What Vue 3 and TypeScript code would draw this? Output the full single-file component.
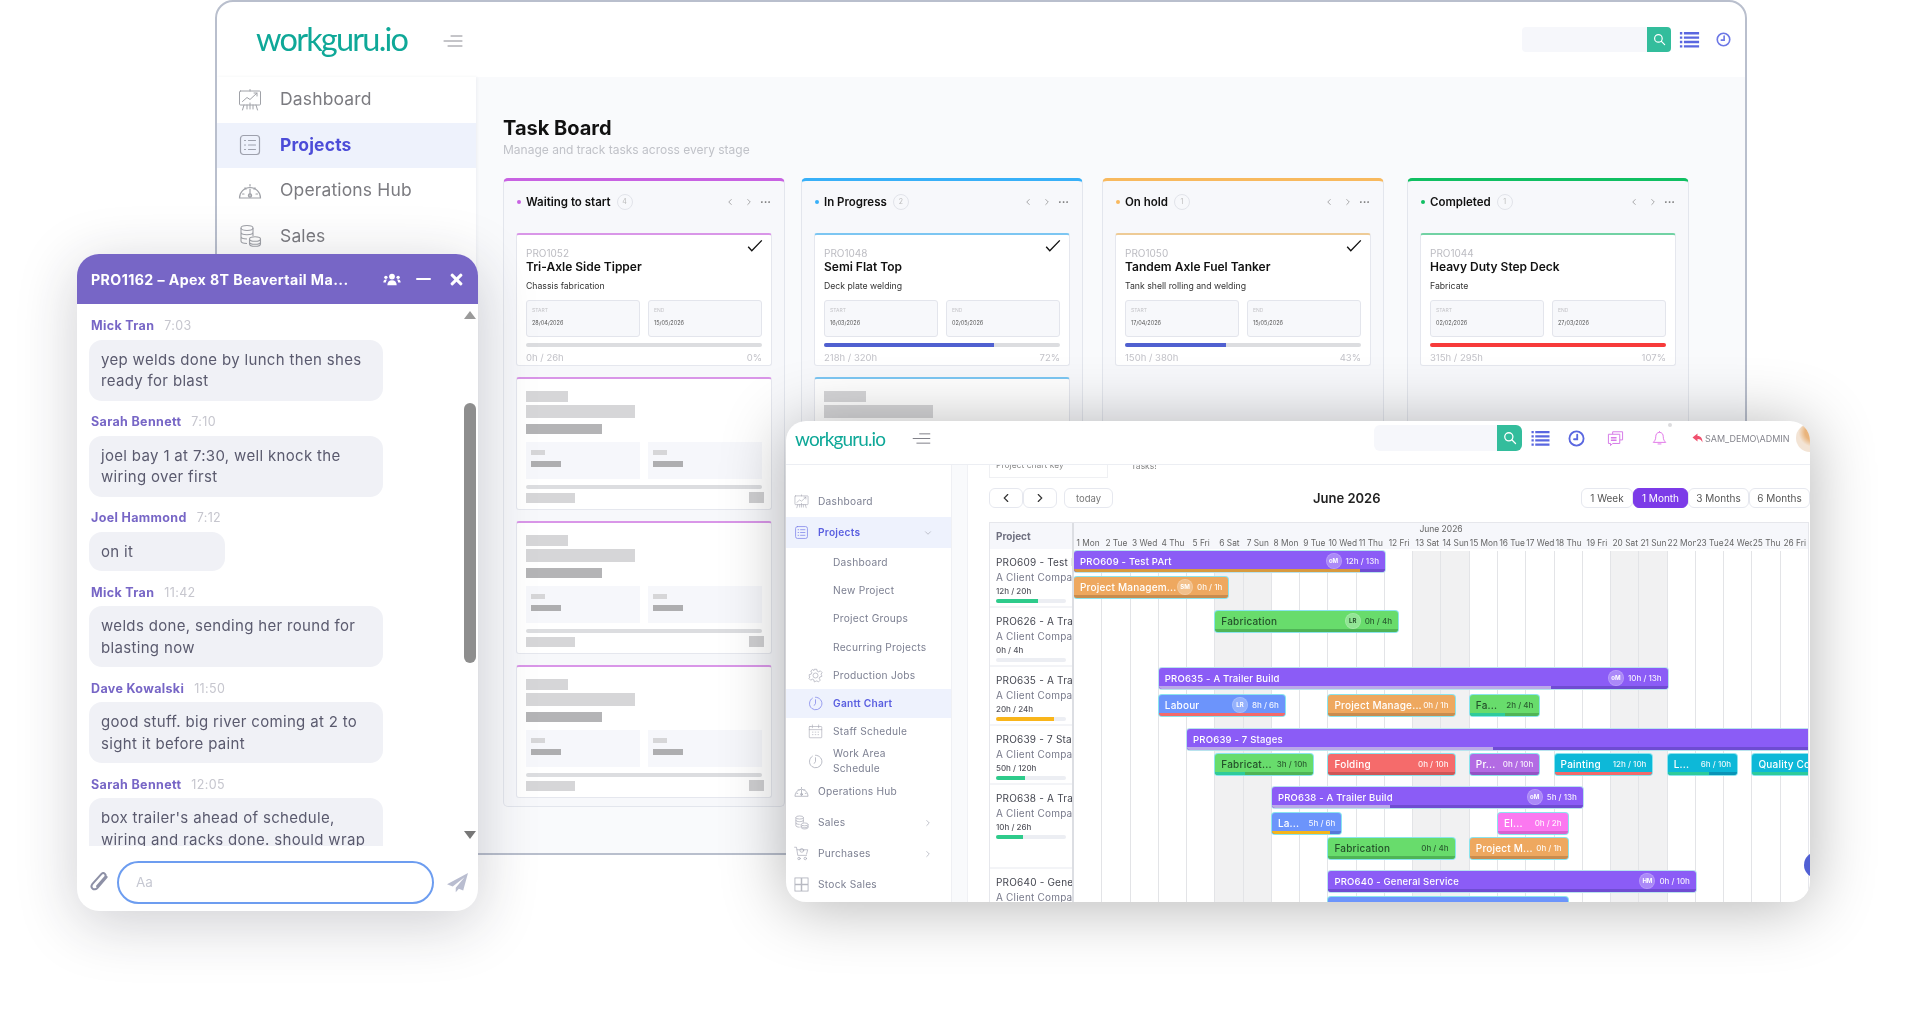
<script setup lang="ts">
interface Stage {
  title: string
  color: string
  soft: string
  count: number
  code: string
  name: string
  sub: string
  start: string
  end: string
  hours: string
  pct: number
  label: string
  bar: string
  done: boolean
  ghosts: number
}

interface Message {
  who: string
  at: string
  text: string
  short?: boolean
}

interface Bar {
  from: number
  to: number
  name: string
  color: string
  track: string
  strip?: string
  fill?: number
  who?: string
  hours?: string
  dark?: boolean
  parent?: boolean
}

interface NavItem {
  label: string
  icon?: string
  sub?: boolean
  active?: boolean
  arrow?: string
  tall?: boolean
}

const stages: Stage[] = [
  { title: 'Waiting to start', color: '#c862e2', soft: '#d996e8', count: 4, code: 'PRO1052', name: 'Tri-Axle Side Tipper', sub: 'Chassis fabrication', start: '28/04/2026', end: '15/05/2026', hours: '0h / 26h', pct: 0, label: '0%', bar: '#5060d0', done: true, ghosts: 3 },
  { title: 'In Progress', color: '#38b0f8', soft: '#7cc6f2', count: 2, code: 'PRO1048', name: 'Semi Flat Top', sub: 'Deck plate welding', start: '16/03/2026', end: '02/05/2026', hours: '218h / 320h', pct: 72, label: '72%', bar: '#5060d0', done: true, ghosts: 1 },
  { title: 'On hold', color: '#f8b95e', soft: '#eecb96', count: 1, code: 'PRO1050', name: 'Tandem Axle Fuel Tanker', sub: 'Tank shell rolling and welding', start: '17/04/2026', end: '15/05/2026', hours: '150h / 380h', pct: 43, label: '43%', bar: '#5060d0', done: true, ghosts: 0 },
  { title: 'Completed', color: '#10bf62', soft: '#72d2a4', count: 1, code: 'PRO1044', name: 'Heavy Duty Step Deck', sub: 'Fabricate', start: '02/02/2026', end: '27/03/2026', hours: '315h / 295h', pct: 100, label: '107%', bar: '#f73a3a', done: false, ghosts: 0 },
]

const messages: Message[] = [
  { who: 'Mick Tran', at: '7:03', text: 'yep welds done by lunch then shes ready for blast' },
  { who: 'Sarah Bennett', at: '7:10', text: 'joel bay 1 at 7:30, well knock the wiring over first' },
  { who: 'Joel Hammond', at: '7:12', text: 'on it', short: true },
  { who: 'Mick Tran', at: '11:42', text: 'welds done, sending her round for blasting now' },
  { who: 'Dave Kowalski', at: '11:50', text: 'good stuff. big river coming at 2 to sight it before paint' },
  { who: 'Sarah Bennett', at: '12:05', text: "box trailer's ahead of schedule, wiring and racks done. should wrap" },
]

const backNav = [
  { label: 'Dashboard', icon: 'i-board' },
  { label: 'Projects', icon: 'i-list', active: true },
  { label: 'Operations Hub', icon: 'i-gauge' },
  { label: 'Sales', icon: 'i-coins' },
]

const ganttNav: NavItem[] = [
  { label: 'Dashboard', icon: 'i-board' },
  { label: 'Projects', icon: 'i-list', active: true, arrow: 'down' },
  { label: 'Dashboard', sub: true },
  { label: 'New Project', sub: true },
  { label: 'Project Groups', sub: true },
  { label: 'Recurring Projects', sub: true },
  { label: 'Production Jobs', sub: true, icon: 'i-gear' },
  { label: 'Gantt Chart', sub: true, icon: 'i-clock', active: true },
  { label: 'Staff Schedule', sub: true, icon: 'i-cal' },
  { label: 'Work Area Schedule', sub: true, icon: 'i-clock', tall: true },
  { label: 'Operations Hub', icon: 'i-gauge' },
  { label: 'Sales', icon: 'i-coins', arrow: 'right' },
  { label: 'Purchases', icon: 'i-cart', arrow: 'right' },
  { label: 'Stock Sales', icon: 'i-grid' },
]

const projects = [
  { name: 'PRO609 - Test PArt', client: 'A Client Company', hours: '12h / 20h', pct: 60, color: '#2ecb8b', height: 59 },
  { name: 'PRO626 - A Trailer', client: 'A Client Company', hours: '0h / 4h', pct: 0, color: '#2ecb8b', height: 59 },
  { name: 'PRO635 - A Trailer', client: 'A Client Company', hours: '20h / 24h', pct: 83, color: '#f9b51a', height: 59 },
  { name: 'PRO639 - 7 Stages', client: 'A Client Company', hours: '50h / 120h', pct: 42, color: '#2ecb8b', height: 59 },
  { name: 'PRO638 - A Trailer', client: 'A Client Company', hours: '10h / 26h', pct: 38, color: '#2ecb8b', height: 84 },
  { name: 'PRO640 - General', client: 'A Client Company', hours: '', pct: 0, color: '#2ecb8b', height: 60 },
]

const dayNames = ['Mon', 'Tue', 'Wed', 'Thu', 'Fri', 'Sat', 'Sun']
const days = Array.from({ length: 26 }, (_, i) => ({
  label: `${i + 1} ${dayNames[i % 7]}`,
  weekend: i % 7 >= 5,
}))

const purple = '#8b5cf6'
const purpleDark = '#6f4cd2'
const pale = '#bba9e8'
const orange = '#eea85f'
const orangeDark = '#c98c4e'
const green = '#68dc6c'
const greenDark = '#4fb456'
const blue = '#6c94fb'
const cyan = '#0db8d8'
const cyanDark = '#0a94b6'
const teal = '#2ecb9b'

const rows: { gap: number; bars: Bar[] }[] = [
  { gap: 2, bars: [{ from: 0, to: 11, name: 'PRO609 - Test PArt', color: purple, track: purpleDark, strip: '#d89a3f', fill: 92, who: 'oM', hours: '12h / 13h', parent: true }] },
  { gap: 5, bars: [{ from: 0, to: 5.46, name: 'Project Managem...', color: orange, track: orangeDark, who: 'SM', hours: '0h / 1h' }] },
  { gap: 13, bars: [{ from: 5, to: 11.46, name: 'Fabrication', color: green, track: greenDark, who: 'LR', hours: '0h / 4h', dark: true }] },
  { gap: 36, bars: [{ from: 3, to: 21, name: 'PRO635 - A Trailer Build', color: purple, track: purpleDark, strip: pale, fill: 77, who: 'oM', hours: '10h / 13h', parent: true }] },
  { gap: 6, bars: [
    { from: 3, to: 7.46, name: 'Labour', color: blue, track: '#5577d8', strip: '#f26a6a', fill: 100, who: 'LR', hours: '8h / 6h' },
    { from: 9, to: 13.46, name: 'Project Manage...', color: orange, track: orangeDark, hours: '0h / 1h' },
    { from: 14, to: 16.46, name: 'Fa...', color: green, track: greenDark, strip: teal, fill: 50, hours: '2h / 4h', dark: true },
  ] },
  { gap: 13, bars: [{ from: 4, to: 27, name: 'PRO639 - 7 Stages', color: purple, track: purpleDark, strip: pale, fill: 47, parent: true }] },
  { gap: 4, bars: [
    { from: 5, to: 8.46, name: 'Fabricat...', color: green, track: greenDark, strip: teal, fill: 30, hours: '3h / 10h', dark: true },
    { from: 9, to: 13.46, name: 'Folding', color: '#f56b6b', track: '#cf5656', hours: '0h / 10h' },
    { from: 14, to: 16.46, name: 'Pr...', color: '#b36be3', track: '#9354c4', hours: '0h / 10h' },
    { from: 17, to: 20.46, name: 'Painting', color: cyan, track: cyanDark, strip: '#f26a6a', fill: 100, hours: '12h / 10h' },
    { from: 21, to: 23.46, name: 'L...', color: cyan, track: cyanDark, strip: teal, fill: 60, hours: '6h / 10h' },
    { from: 24, to: 27.5, name: 'Quality Control', color: cyan, track: cyanDark, strip: teal, fill: 100 },
  ] },
  { gap: 12, bars: [{ from: 7, to: 18, name: 'PRO638 - A Trailer Build', color: purple, track: purpleDark, strip: pale, fill: 38, who: 'oM', hours: '5h / 13h', parent: true }] },
  { gap: 5, bars: [
    { from: 7, to: 9.46, name: 'La...', color: blue, track: '#5577d8', strip: '#f5b51a', fill: 83, hours: '5h / 6h' },
    { from: 15, to: 17.46, name: 'El...', color: '#fb78f0', track: '#d862cf', hours: '0h / 2h' },
  ] },
  { gap: 4, bars: [
    { from: 9, to: 13.46, name: 'Fabrication', color: green, track: greenDark, hours: '0h / 4h', dark: true },
    { from: 14, to: 17.46, name: 'Project M...', color: orange, track: orangeDark, hours: '0h / 1h' },
  ] },
  { gap: 12, bars: [{ from: 9, to: 22, name: 'PRO640 - General Service', color: purple, track: purpleDark, who: 'HM', hours: '0h / 10h', parent: true }] },
  { gap: 5, bars: [{ from: 9, to: 17.46, name: '', color: blue, track: '#5577d8' }] },
]

const dayWidth = 28.27
const views = ['1 Week', '1 Month', '3 Months', '6 Months']
</script>

<template>
  <div class="canvas">
    <svg class="defs" width="0" height="0">
      <symbol id="i-menu" viewBox="0 0 20 14" fill="none" stroke="currentColor" stroke-width="1" stroke-linecap="round">
        <path d="M8 2h11M1 7h18M5 12h14" />
      </symbol>
      <symbol id="i-board" viewBox="0 0 24 24" fill="none" stroke="currentColor" stroke-width="1" stroke-linecap="round">
        <rect x="1.500" y="3" width="21" height="14" rx="1" />
        <path d="M12 3V1.500M4.500 13.500 9 9.500l3 2 7-6.500M16 5h3v3M6 17l-1.500 5M18 17l1.500 5M9 17v4M12 15v6M15 17v4" />
      </symbol>
      <symbol id="i-list" viewBox="0 0 24 24" fill="none" stroke="currentColor" stroke-width="1.200" stroke-linecap="round">
        <rect x="2.500" y="2.500" width="19" height="19" rx="3" />
        <path d="M6.500 7.500h1M6.500 12h1M6.500 16.500h1M10.500 7.500h7M10.500 12h7M10.500 16.500h7" />
      </symbol>
      <symbol id="i-gauge" viewBox="0 0 24 24" fill="none" stroke="currentColor" stroke-width="1.200" stroke-linecap="round">
        <path d="M1.500 19a10.500 10.500 0 1 1 21 0z" />
        <path d="M12 18V10M4.500 15H6M18 15h1.500M7 9l1 1M17 9l-1 1M12 5.500V7" />
        <circle cx="12" cy="16.500" r="1.600" />
      </symbol>
      <symbol id="i-coins" viewBox="0 0 24 24" fill="none" stroke="currentColor" stroke-width="1.100">
        <ellipse cx="9" cy="4" rx="6" ry="2.500" />
        <path d="M3 4v13c0 1.400 2.700 2.500 6 2.500M15 4v8M3 8.200c0 1.400 2.700 2.500 6 2.500s6-1.100 6-2.500M3 12.500C3 13.900 5.700 15 9 15" />
        <ellipse cx="17" cy="15" rx="5.500" ry="2.300" />
        <path d="M11.500 15v5c0 1.300 2.500 2.300 5.500 2.300s5.500-1 5.500-2.300v-5M11.500 18c0 1.300 2.500 2.300 5.500 2.300s5.500-1 5.500-2.300" />
      </symbol>
      <symbol id="i-gear" viewBox="0 0 24 24" fill="none" stroke="currentColor" stroke-width="1.100">
        <circle cx="12" cy="12" r="4" />
        <path d="M10 2h4l.6 3 2.500 1.100L19.700 4.500l2.800 2.800-1.600 2.600L22 12.500v1l-3 .8-1 2.500 1.600 2.600-2.800 2.800-2.600-1.600-2.500 1L11 22H10l-.6-3-2.500-1.100-2.600 1.600-2.800-2.800 1.600-2.600L2 13.500v-3l3-.6 1-2.500-1.600-2.600 2.800-2.300 2.400 1.500z" />
      </symbol>
      <symbol id="i-clock" viewBox="0 0 24 24" fill="none" stroke="currentColor" stroke-width="1.200" stroke-linecap="round">
        <path d="M7 3.500A10 10 0 1 0 12 2" />
        <path d="M12 6v6l-2 3" />
      </symbol>
      <symbol id="i-ring" viewBox="0 0 24 24" fill="none" stroke="currentColor" stroke-width="2.600" stroke-linecap="round">
        <circle cx="12" cy="12" r="10" />
        <path d="M13 6.500V13H8.500" />
      </symbol>
      <symbol id="i-cal" viewBox="0 0 24 24" fill="none" stroke="currentColor" stroke-width="1" stroke-linecap="round">
        <rect x="2" y="4" width="20" height="18" rx="1" />
        <path d="M7 1.500V6M17 1.500V6M2 9h20M7 13h1M11.500 13h1M16 13h1M7 17h1M11.500 17h1M16 17h1" />
      </symbol>
      <symbol id="i-cart" viewBox="0 0 24 24" fill="none" stroke="currentColor" stroke-width="1.100" stroke-linecap="round">
        <path d="M1 2h3l2 13h14M5 6h17l-2 7" />
        <circle cx="12.500" cy="7" r="3" />
        <circle cx="8" cy="20" r="2" />
        <circle cx="18" cy="20" r="2" />
      </symbol>
      <symbol id="i-grid" viewBox="0 0 24 24" fill="none" stroke="currentColor" stroke-width="1.200">
        <rect x="1.500" y="1.500" width="10" height="10" />
        <rect x="12.500" y="1.500" width="10" height="10" />
        <rect x="1.500" y="12.500" width="10" height="10" />
        <rect x="12.500" y="12.500" width="10" height="10" />
      </symbol>
      <symbol id="i-down" viewBox="0 0 12 12" fill="none" stroke="currentColor" stroke-width="1" stroke-linecap="round">
        <path d="m3 4.500 3 3 3-3" />
      </symbol>
      <symbol id="i-right" viewBox="0 0 12 12" fill="none" stroke="currentColor" stroke-width="1" stroke-linecap="round">
        <path d="m4.500 3 3 3-3 3" />
      </symbol>
      <symbol id="i-left" viewBox="0 0 12 12" fill="none" stroke="currentColor" stroke-width="1" stroke-linecap="round">
        <path d="M7.500 3l-3 3 3 3" />
      </symbol>
      <symbol id="i-search" viewBox="0 0 24 24" fill="none" stroke="currentColor" stroke-width="2.200" stroke-linecap="round">
        <circle cx="10" cy="10" r="7" />
        <path d="m15.500 15.500 6 6" />
      </symbol>
      <symbol id="i-lines" viewBox="0 0 24 20" fill="currentColor">
        <path d="M0 0h3v3H0zM5 0h19v3H5zM0 5.500h3v3H0zM5 5.500h19v3H5zM0 11h3v3H0zM5 11h19v3H5zM0 16.500h3v3H0zM5 16.500h19v3H5z" />
      </symbol>
      <symbol id="i-chat" viewBox="0 0 24 24" fill="none" stroke="currentColor" stroke-width="1.400" stroke-linejoin="round">
        <path d="M8 6V2.500h14V14h-4" />
        <path d="M2 6h16v13H8l-3 3v-3H2z" />
        <path d="M5.500 11h8M5.500 14.500h8" stroke-width="2" />
      </symbol>
      <symbol id="i-bell" viewBox="0 0 24 24" fill="none" stroke="currentColor" stroke-width="1.500" stroke-linejoin="round">
        <path d="M12 3c-4 0-6 3-6 7 0 5-2 7-4 9h20c-2-2-4-4-4-9 0-4-2-7-6-7z" />
        <path d="M9 21.500h6M12 1v2" />
      </symbol>
      <symbol id="i-reply" viewBox="0 0 24 24" fill="currentColor">
        <path d="M11 3 1 11l10 8v-5c5 0 8 2 10 7 0-8-3-13-10-13z" />
      </symbol>
      <symbol id="i-users" viewBox="0 0 24 18" fill="currentColor">
        <circle cx="12" cy="5" r="4" />
        <path d="M5.500 17c0-4.500 2.500-7 6.500-7s6.500 2.500 6.500 7z" />
        <circle cx="3.500" cy="6" r="2.300" />
        <circle cx="20.500" cy="6" r="2.300" />
        <path d="M0 13c0-2.500 1.500-4 3.500-4 .6 0 1.100.1 1.500.3C4 10.500 3.600 11.700 3.500 13zM24 13c0-2.500-1.500-4-3.500-4-.6 0-1.100.1-1.500.3 1 1.200 1.400 2.400 1.500 3.700z" />
      </symbol>
      <symbol id="i-clip" viewBox="0 0 24 24" fill="none" stroke="currentColor" stroke-width="2.400" stroke-linecap="round">
        <path d="M20 6 9 19c-1.600 2-4.300 2.300-5.800 1-1.600-1.300-1.700-3.800-.2-5.700L13.500 2.500c1.200-1.300 3-1.500 4.200-.5s1.300 2.700.2 4.100L8.500 17" />
      </symbol>
      <symbol id="i-send" viewBox="0 0 24 24" fill="currentColor">
        <path d="M24 1 0 14l6.500 2.500L20 6 10 18v5l3.500-4 5 2z" />
      </symbol>
      <symbol id="i-check" viewBox="0 0 20 16" fill="none" stroke="currentColor" stroke-width="1.700">
        <path d="m1.500 9 4.500 5L18.500 1" />
      </symbol>
    </svg>

    <!-- window at the back: task board -->
    <section class="win-back">
      <header class="back-top">
        <span class="logo">workguru.io</span>
        <svg class="back-menu"><use href="#i-menu" /></svg>
        <div class="back-tools">
          <div class="search">
            <span class="search-btn"><svg class="search-ico"><use href="#i-search" /></svg></span>
          </div>
          <svg class="tool-lines"><use href="#i-lines" /></svg>
          <svg class="tool-ring"><use href="#i-ring" /></svg>
        </div>
      </header>
      <div class="back-body">
        <nav class="back-nav">
          <div v-for="item in backNav" :key="item.label" class="back-link" :class="{ on: item.active }">
            <svg class="back-ico"><use :href="'#' + item.icon" /></svg>
            <span>{{ item.label }}</span>
          </div>
        </nav>
        <main class="board-page">
          <h1 class="page-title">Task Board</h1>
          <p class="page-sub">Manage and track tasks across every stage</p>
          <div class="board">
            <div v-for="st in stages" :key="st.title" class="col" :style="{ borderTopColor: st.color }">
              <div class="col-head">
                <i class="dot" :style="{ background: st.color }"></i>
                <b>{{ st.title }}</b>
                <span class="count">{{ st.count }}</span>
                <span class="col-tools">
                  <svg><use href="#i-left" /></svg>
                  <svg><use href="#i-right" /></svg>
                  <em>···</em>
                </span>
              </div>
              <article class="card" :style="{ borderTopColor: st.soft }">
                <svg v-if="st.done" class="check"><use href="#i-check" /></svg>
                <div class="card-code">{{ st.code }}</div>
                <div class="card-name">{{ st.name }}</div>
                <div class="card-sub">{{ st.sub }}</div>
                <div class="dates">
                  <div class="date"><small>START</small><span>{{ st.start }}</span></div>
                  <div class="date"><small>END</small><span>{{ st.end }}</span></div>
                </div>
                <div class="meter"><i :style="{ width: st.pct + '%', background: st.bar }"></i></div>
                <div class="card-foot"><span>{{ st.hours }}</span><span>{{ st.label }}</span></div>
              </article>
              <article v-for="n in st.ghosts" :key="n" class="card ghost" :style="{ borderTopColor: st.soft }">
                <i class="g g-code"></i>
                <i class="g g-name"></i>
                <i class="g g-sub"></i>
                <div class="g-dates">
                  <div class="g-date"><i class="g g-lab"></i><i class="g g-val"></i></div>
                  <div class="g-date"><i class="g g-lab"></i><i class="g g-val"></i></div>
                </div>
                <div class="meter"></div>
                <div class="g-foot"><i class="g g-hours"></i><i class="g g-pct"></i></div>
              </article>
            </div>
          </div>
        </main>
      </div>
    </section>

    <!-- chat window -->
    <section class="win-chat">
      <header class="chat-top">
        <span class="chat-title">PRO1162 – Apex 8T Beavertail Ma...</span>
        <svg class="chat-users"><use href="#i-users" /></svg>
        <i class="chat-min"></i>
        <span class="chat-x"></span>
      </header>
      <div class="chat-body">
        <div class="msgs">
          <div v-for="(m, i) in messages" :key="i" class="msg">
            <div class="msg-head"><b>{{ m.who }}</b><span>{{ m.at }}</span></div>
            <div class="bubble" :class="{ short: m.short }">{{ m.text }}</div>
          </div>
        </div>
        <div class="scroll">
          <i class="tri up"></i>
          <i class="thumb"></i>
          <i class="tri down"></i>
        </div>
      </div>
      <footer class="chat-foot">
        <svg class="clip"><use href="#i-clip" /></svg>
        <div class="chat-input">Aa</div>
        <svg class="send"><use href="#i-send" /></svg>
      </footer>
    </section>

    <!-- window at the front: gantt -->
    <section class="win-gantt">
      <header class="g-top">
        <span class="logo small">workguru.io</span>
        <svg class="g-menu"><use href="#i-menu" /></svg>
        <div class="g-tools">
          <div class="search">
            <span class="search-btn"><svg class="search-ico"><use href="#i-search" /></svg></span>
          </div>
          <svg class="t-lines"><use href="#i-lines" /></svg>
          <svg class="t-ring"><use href="#i-ring" /></svg>
          <svg class="t-chat"><use href="#i-chat" /></svg>
          <svg class="t-bell"><use href="#i-bell" /></svg>
          <i class="t-dot"></i>
          <svg class="t-reply"><use href="#i-reply" /></svg>
          <span class="t-user">SAM_DEMO\ADMIN</span>
          <i class="t-avatar"></i>
        </div>
      </header>
      <div class="g-body">
        <nav class="g-nav">
          <div
            v-for="(item, i) in ganttNav"
            :key="i"
            class="g-link"
            :class="{ on: item.active, sub: item.sub, tall: item.tall }"
          >
            <svg v-if="item.icon" class="g-ico"><use :href="'#' + item.icon" /></svg>
            <span class="g-label">{{ item.label }}</span>
            <svg v-if="item.arrow" class="g-arrow"><use :href="item.arrow === 'down' ? '#i-down' : '#i-right'" /></svg>
          </div>
        </nav>
        <div class="g-strip"></div>
        <div class="g-main">
          <div class="sliver">
            <div class="sliver-box">Project chart key</div>
            <span>Tasks!</span>
          </div>
          <div class="toolbar">
            <div class="btn-pair">
              <button class="tb-btn"><svg><use href="#i-left" /></svg></button>
              <button class="tb-btn"><svg><use href="#i-right" /></svg></button>
            </div>
            <button class="today">today</button>
            <h2 class="month">June 2026</h2>
            <div class="views">
              <button v-for="v in views" :key="v" class="view" :class="{ on: v === '1 Month' }">{{ v }}</button>
            </div>
          </div>
          <div class="table">
            <div class="proj-col">
              <div class="proj-head">Project</div>
              <div v-for="p in projects" :key="p.name" class="proj-row" :style="{ height: p.height + 'px' }">
                <div class="proj-name">{{ p.name }}</div>
                <div class="proj-client">{{ p.client }}</div>
                <div class="proj-hours">{{ p.hours }}</div>
                <div v-if="p.hours" class="proj-meter"><i :style="{ width: p.pct + '%', background: p.color }"></i></div>
              </div>
            </div>
            <div class="timeline">
              <div class="tl-month">June 2026</div>
              <div class="tl-days">
                <span v-for="d in days" :key="d.label" class="tl-day">{{ d.label }}</span>
              </div>
              <div class="tl-grid">
                <div class="tl-lines">
                  <i v-for="d in days" :key="d.label" :class="{ weekend: d.weekend }"></i>
                </div>
                <div v-for="(row, r) in rows" :key="r" class="tl-row" :style="{ marginTop: row.gap + 'px' }">
                  <div
                    v-for="b in row.bars"
                    :key="b.name + b.from"
                    class="bar"
                    :class="{ parent: b.parent, dark: b.dark }"
                    :style="{ left: b.from * dayWidth + 'px', width: (b.to - b.from) * dayWidth + 'px', background: b.color }"
                  >
                    <span class="bar-name">{{ b.name }}</span>
                    <span v-if="b.who" class="bar-who">{{ b.who }}</span>
                    <span v-if="b.hours" class="bar-hours">{{ b.hours }}</span>
                    <div class="bar-track" :style="{ background: b.track }">
                      <i v-if="b.strip" :style="{ width: b.fill + '%', background: b.strip }"></i>
                    </div>
                  </div>
                </div>
              </div>
            </div>
          </div>
        </div>
      </div>
      <i class="help-dot"></i>
    </section>
  </div>
</template>

<style scoped>
.canvas {
  position: relative;
  width: 1932px;
  height: 1023px;
  overflow: hidden;
  background: #fff;
  font-family: Inter, "Liberation Sans", sans-serif;
  filter: blur(0.55px);
}
.defs { position: absolute; }
button { font-family: inherit; cursor: pointer; }

.logo {
  flex: none;
  width: 152px;
  font-family: Lato, Inter, sans-serif;
  font-size: 32.500px;
  font-weight: 400;
  color: #0fa898;
  letter-spacing: -1.800px;
  line-height: 1;
  white-space: nowrap;
}
.logo.small { width: 86px; font-size: 19px; letter-spacing: -0.900px; }

.search {
  display: flex;
  justify-content: flex-end;
  background: #f6f7fb;
  border-radius: 4px;
  overflow: hidden;
}
.search-btn {
  display: flex;
  align-items: center;
  justify-content: center;
  background: #33bd9c;
}
.search-ico { color: #fff; }

/* back window */
.win-back {
  position: absolute;
  left: 215px;
  top: 0;
  width: 1532px;
  height: 855px;
  box-sizing: border-box;
  display: flex;
  flex-direction: column;
  background: #fff;
  border: 2px solid #b9bfcd;
  border-radius: 18px 18px 0 0;
  overflow: hidden;
}
.back-top {
  flex: 0 0 75px;
  display: flex;
  align-items: center;
  padding-left: 39px;
}
.back-menu { width: 20px; height: 14px; margin-left: 35px; margin-top: 2px; color: #8a8a92; }
.back-tools { margin-left: auto; display: flex; align-items: center; padding-right: 14px; }
.back-tools .search { width: 149px; height: 25px; }
.back-tools .search-btn { width: 24px; height: 25px; }
.back-tools .search-ico { width: 13px; height: 15px; }
.tool-lines { width: 21px; height: 16px; margin-left: 8px; color: #5a67e0; }
.tool-ring { width: 15px; height: 15px; margin-left: 16px; color: #6d78e6; }

.back-body { flex: 1; display: flex; min-height: 0; background: #f9fafc; }
.back-nav { width: 259px; flex: none; background: #fff; box-shadow: 1px 0 3px rgba(40, 50, 80, 0.06); }
.back-link {
  height: 45.500px;
  display: flex;
  align-items: center;
  gap: 18px;
  padding-left: 21px;
  font-size: 17.500px;
  letter-spacing: 0.150px;
  color: #7b7b80;
}
.back-link span { margin-top: -2px; }
.back-link.on { background: #eef2fc; color: #4c4cd8; font-weight: 700; }
.back-ico { width: 24px; height: 24px; color: #a0a2a8; }
.back-link.on .back-ico { color: #9ea1ad; }

.board-page { padding: 39px 0 0 27px; }
.page-title { margin: 0; font-size: 20px; font-weight: 700; line-height: 24px; color: #111; }
.page-sub { margin: 2px 0 0; font-size: 12px; line-height: 16px; color: #c0c2c8; }
.board { display: flex; gap: 16px; margin-top: 20px; }
.col {
  width: 282px;
  box-sizing: border-box;
  padding: 0 12px 8px;
  background: #f7f8fb;
  border: 1px solid #e3e6ed;
  border-top: 3px solid;
  border-radius: 5px;
}
.col:nth-child(3) { margin-left: 3px; }
.col:nth-child(4) { margin-left: 7px; }
.col-head { height: 42px; margin-bottom: 10px; display: flex; align-items: center; font-size: 11.500px; color: #111; }
.dot { width: 4px; height: 4px; margin-right: 3px; border-radius: 50%; margin-left: 1px; }
.col-head b { font-weight: 600; margin-left: 2px; }
.count {
  width: 14px;
  height: 14px;
  margin-left: 6px;
  border: 1px solid #e2e4ea;
  border-radius: 50%;
  text-align: center;
  font-size: 7px;
  line-height: 14px;
  color: #bbb;
}
.col-tools { margin-left: auto; display: flex; align-items: center; gap: 9px; color: #999; padding-right: 1px; }
.col-tools svg { width: 10px; height: 10px; }
.col-tools em { font-style: normal; font-size: 11px; font-weight: 700; color: #777; margin-left: -3px; }

.card {
  position: relative;
  height: 133px;
  box-sizing: border-box;
  padding: 12px 9px 0;
  margin-bottom: 11px;
  background: #fff;
  border: 1px solid #e5e7ee;
  border-top: 2px solid;
  border-radius: 3px;
}
.card:last-child { margin-bottom: 0; }
.check { position: absolute; right: 8px; top: 4px; width: 16px; height: 14px; color: #111; }
.card-code { font-size: 10px; line-height: 12px; color: #bcbcc2; }
.card-name { font-size: 12px; font-weight: 600; line-height: 16px; color: #111; }
.card-sub { margin-top: 5px; font-size: 8.700px; line-height: 12px; color: #333; }
.dates { display: flex; gap: 8px; margin-top: 8px; }
.date {
  flex: 1;
  height: 37px;
  box-sizing: border-box;
  padding: 6px 5px;
  display: flex;
  flex-direction: column;
  gap: 6px;
  background: #f7f8fb;
  border: 1px solid #e3e5ec;
  border-radius: 3px;
  font-size: 5.500px;
  line-height: 7px;
  color: #555;
}
.date small { font-size: 5px; color: #c4c4c8; }
.meter { height: 4px; margin-top: 6px; background: #dcdde0; border-radius: 2px; overflow: hidden; }
.meter i { display: block; height: 100%; }
.card-foot { display: flex; justify-content: space-between; margin-top: 5px; font-size: 9.500px; line-height: 12px; color: #c2c2c8; }

.ghost { padding-top: 12px; }
.g { display: block; background: #d6d6d8; }
.g-code { width: 42px; height: 11px; }
.g-name { width: 109px; height: 13px; margin-top: 3px; }
.g-sub { width: 76px; height: 10px; margin-top: 6px; background: #b4b4b6; }
.g-dates { display: flex; gap: 8px; margin-top: 8px; }
.g-date { flex: 1; height: 37px; box-sizing: border-box; padding: 8px 5px; background: #f6f7fb; }
.g-lab { width: 14px; height: 5px; }
.g-val { width: 30px; height: 6px; margin-top: 6px; background: #aeaeb0; }
.ghost .meter { margin-top: 6px; }
.g-foot { display: flex; justify-content: space-between; align-items: flex-end; margin-top: 3px; }
.g-hours { width: 49px; height: 10px; }
.g-pct { width: 15px; height: 11px; margin-right: -2px; background: #cfcfd1; }

/* chat window */
.win-chat {
  position: absolute;
  left: 77px;
  top: 254px;
  width: 401px;
  height: 657px;
  display: flex;
  flex-direction: column;
  background: #fff;
  border-radius: 22px;
  box-shadow: 0 12px 60px rgba(30, 30, 50, 0.22);
}
.chat-top {
  flex: 0 0 50px;
  display: flex;
  align-items: center;
  padding-left: 14px;
  background: #7766c6;
  border-radius: 22px 22px 0 0;
  color: #fff;
}
.chat-title { width: 292px; font-size: 14.200px; font-weight: 700; letter-spacing: 0.400px; white-space: nowrap; }
.chat-users { width: 18px; height: 13px; }
.chat-min { width: 15px; height: 2.500px; margin-left: 15px; background: #fff; border-radius: 2px; }
.chat-x { position: relative; width: 13px; height: 13px; margin-left: 19px; }
.chat-x::before,
.chat-x::after {
  content: "";
  position: absolute;
  left: -1px;
  top: 5px;
  width: 15px;
  height: 3px;
  background: #fff;
  border-radius: 1px;
  transform: rotate(45deg);
}
.chat-x::after { transform: rotate(-45deg); }

.chat-body { flex: 0 0 542px; display: flex; overflow: hidden; }
.msgs { width: 387px; flex: none; box-sizing: border-box; padding: 14px 0 0 12px; overflow: hidden; }
.msg { margin-bottom: 13.500px; }
.msg-head { display: flex; gap: 10px; height: 16px; margin-bottom: 5.500px; padding-left: 2px; font-size: 12.500px; letter-spacing: 0.350px; line-height: 16px; }
.msg-head b { font-weight: 700; color: #7766c6; }
.msg-head span { color: #c6c6ce; }
.bubble {
  width: 294px;
  box-sizing: border-box;
  padding: 9px 12px;
  background: #f0f1f6;
  border-radius: 13px;
  font-size: 15px;
  letter-spacing: 0.330px;
  line-height: 21.500px;
  color: #5a5a6e;
}
.bubble.short { width: 136px; }
.scroll { width: 12px; padding-top: 7px; display: flex; flex-direction: column; align-items: center; }
.tri { width: 0; height: 0; border-left: 6px solid transparent; border-right: 6px solid transparent; }
.tri.up { border-bottom: 8px solid #9a9a9a; }
.tri.down { border-top: 8px solid #777; margin-top: 168px; }
.thumb { width: 12px; height: 260px; margin-top: 84px; background: #8e8e8e; border-radius: 6px; }
.chat-foot { flex: 1; display: flex; align-items: center; padding: 7px 0 0 13px; }
.clip { width: 20px; height: 20px; color: #8d90a6; }
.chat-input {
  width: 317px;
  height: 43px;
  margin-left: 7px;
  box-sizing: border-box;
  padding-left: 17px;
  border: 2px solid #6d9df0;
  border-radius: 22px;
  font-size: 13.500px;
  line-height: 39px;
  color: #c6c8d2;
}
.send { width: 21px; height: 21px; margin-left: 13px; color: #b9bdd0; }

/* gantt window */
.win-gantt {
  position: absolute;
  left: 786px;
  top: 421px;
  width: 1024px;
  height: 481px;
  display: flex;
  flex-direction: column;
  background: #fff;
  border-radius: 20px;
  overflow: hidden;
  box-shadow: 0 4px 65px rgba(0, 0, 0, 0.3);
}
.g-top {
  flex: 0 0 44px;
  display: flex;
  align-items: center;
  padding: 0 0 9px 9px;
  border-bottom: 1px solid #eceef3;
  box-sizing: border-box;
}
.g-menu { width: 19px; height: 13px; margin-left: 31px; color: #77777f; }
.g-tools { position: relative; margin-left: auto; display: flex; align-items: center; }
.g-tools .search { width: 148px; height: 26px; border-radius: 6px; }
.g-tools .search-btn { width: 25px; height: 26px; }
.g-tools .search-ico { width: 14px; height: 14px; }
.t-lines { width: 19px; height: 15px; margin-left: 9px; color: #5a67e0; }
.t-ring { width: 17px; height: 17px; margin-left: 18px; color: #5a67e0; }
.t-chat { width: 17px; height: 17px; margin-left: 22px; color: #d77be8; }
.t-bell { width: 15px; height: 16px; margin-left: 28px; color: #e072e8; }
.t-dot { position: absolute; left: 294px; top: -1px; width: 4px; height: 4px; background: #dcdcde; border-radius: 50%; }
.t-reply { width: 12px; height: 12px; margin-left: 25px; color: #f0506e; }
.t-user { width: 91px; margin-left: 1px; font-size: 9px; color: #85858d; white-space: nowrap; }
.t-avatar {
  width: 28px;
  height: 28px;
  margin-right: -14px;
  border-radius: 50%;
  background: radial-gradient(circle at 60% 30%, #e9b47c 0 30%, #f3e4d5 55%), #f3e4d5;
}
.g-body { flex: 1; display: flex; min-height: 0; }
.g-nav { width: 166px; flex: none; padding-top: 21px; box-sizing: border-box; border-right: 1px solid #eff0f4; }
.g-link {
  position: relative;
  height: 28.300px;
  display: flex;
  align-items: center;
  padding-left: 32px;
  font-size: 10.200px;
  letter-spacing: 0.250px;
  color: #7d8092;
}
.g-link:not(.sub) { height: 31px; }
.g-link.sub { padding-left: 47px; }
.g-link.tall { height: 30px; }
.g-label { line-height: 15px; width: 90px; }
.g-link.sub .g-label { width: 105px; }
.g-link.tall .g-label { width: 70px; }
.g-link.on { background: #eef2fd; color: #5a5fe0; font-weight: 600; }
.g-ico { position: absolute; left: 8px; top: 50%; width: 15px; height: 15px; margin-top: -7.500px; color: #a6a8b4; }
.g-link.sub .g-ico { left: 22px; }
.g-link.on .g-ico { color: #7d83ea; }
.g-arrow { position: absolute; left: 137px; top: 50%; width: 10px; height: 10px; margin-top: -5px; color: #b5b7c2; }
.g-strip { width: 16px; flex: none; background: #f9fafc; border-right: 1px solid #f0f1f5; box-sizing: border-box; }
.g-main { flex: 1; min-width: 0; padding-left: 21px; overflow: hidden; }

.sliver { height: 13px; display: flex; overflow: hidden; font-size: 8.500px; color: #888; }
.sliver-box {
  width: 119px;
  height: 13px;
  box-sizing: border-box;
  margin-right: 23px;
  padding: 0 6px;
  border: 1px solid #eff0f3;
  border-top: 0;
  line-height: 1px;
}
.sliver span { line-height: 2px; }
.toolbar { display: flex; align-items: center; height: 20px; margin-top: 10px; }
.btn-pair { display: flex; }
.tb-btn {
  width: 34px;
  height: 20px;
  padding: 0;
  display: flex;
  align-items: center;
  justify-content: center;
  background: #fff;
  border: 1px solid #e6e8ef;
  border-radius: 6px;
  color: #333;
}
.tb-btn svg { width: 14px; height: 14px; }
.today {
  width: 49px;
  height: 20px;
  margin-left: 7px;
  padding: 0;
  background: #fff;
  border: 1px solid #e6e8ef;
  border-radius: 6px;
  font-size: 9.500px;
  color: #777;
}
.month { margin: 0 0 0 200px; font-size: 13px; font-weight: 600; color: #222; white-space: nowrap; }
.views { margin-left: auto; display: flex; }
.view {
  height: 20px;
  padding: 0;
  width: 55px;
  background: #fff;
  border: 1px solid #e6e8ef;
  border-radius: 6px;
  font-size: 10px;
  color: #555;
}
.view:nth-child(1) { width: 52px; }
.view:nth-child(3),
.view:nth-child(4) { width: 61px; }
.view.on { background: #7c3be8; border-color: #7c3be8; color: #fff; }

.table {
  display: flex;
  width: 820px;
  height: 390px;
  margin-top: 14px;
  box-sizing: border-box;
  border: 1px solid #e6e7ec;
  overflow: hidden;
}
.proj-col { width: 82px; flex: none; border-right: 2px solid #dcdee3; overflow: hidden; }
.proj-head {
  height: 26px;
  padding-left: 6px;
  background: #f6f7fb;
  font-size: 10px;
  font-weight: 700;
  line-height: 26px;
  color: #6f7080;
}
.proj-row {
  box-sizing: border-box;
  padding: 6px 0 0 6px;
  border-bottom: 2px solid #f3f4f7;
  white-space: nowrap;
  overflow: hidden;
}
.proj-name { font-size: 10px; letter-spacing: 0.2px; line-height: 14px; color: #444650; }
.proj-client { margin-top: 1px; font-size: 10px; letter-spacing: 0.2px; line-height: 14px; color: #77798a; }
.proj-hours { margin-top: 1px; font-size: 8px; font-weight: 500; line-height: 12px; color: #55565f; }
.proj-meter { width: 70px; height: 4px; margin-top: 2px; background: #eceef3; border-radius: 2px; overflow: hidden; }
.proj-meter i { display: block; height: 100%; }

.timeline { flex: 1; min-width: 0; overflow: hidden; }
.tl-month { height: 13px; background: #f6f7fb; text-align: center; font-size: 8.500px; line-height: 13px; color: #666; }
.tl-days { height: 13px; display: flex; background: #f6f7fb; }
.tl-day {
  flex: 0 0 28.270px;
  overflow: hidden;
  text-align: center;
  white-space: nowrap;
  font-size: 8.300px;
  line-height: 14px;
  color: #666;
}
.tl-grid { position: relative; height: 400px; }
.tl-lines { position: absolute; inset: 0; display: flex; }
.tl-lines i { flex: 0 0 28.270px; box-sizing: border-box; border-right: 1px solid #e3e4e7; }
.tl-lines i.weekend { background: #f1f1f2; }
.tl-row { position: relative; height: 21px; }
.bar {
  position: absolute;
  top: 0;
  height: 21px;
  box-sizing: border-box;
  display: flex;
  align-items: center;
  padding: 0 6px 1px;
  border-radius: 3px;
  box-shadow: 0 0 0 1px #8ae4ee;
  overflow: hidden;
  color: #fff;
  font-size: 10px;
  font-weight: 500;
  letter-spacing: 0.2px;
  white-space: nowrap;
}
.bar.parent { box-shadow: 0 0 0 1px #b9e3ee; font-size: 9.500px; }
.bar.dark { color: #24502a; }
.bar-name { flex: 1; min-width: 0; overflow: hidden; }
.bar-who {
  flex: none;
  width: 14px;
  height: 14px;
  margin-right: 5px;
  border-radius: 50%;
  background: rgba(255, 255, 255, 0.28);
  box-shadow: 0 0 0 1px rgba(255, 255, 255, 0.4);
  text-align: center;
  font-size: 6px;
  font-weight: 700;
  letter-spacing: 0;
  line-height: 14px;
}
.bar-hours { flex: none; font-size: 8px; letter-spacing: 0; opacity: 0.9; }
.bar-track { position: absolute; left: 0; right: 0; bottom: 0; height: 3px; }
.bar-track i { display: block; height: 100%; }
.help-dot {
  position: absolute;
  left: 1018px;
  top: 431px;
  width: 26px;
  height: 26px;
  background: #5160d4;
  border-radius: 50%;
}
</style>

<style>
html, body { background: #fff; }
</style>
